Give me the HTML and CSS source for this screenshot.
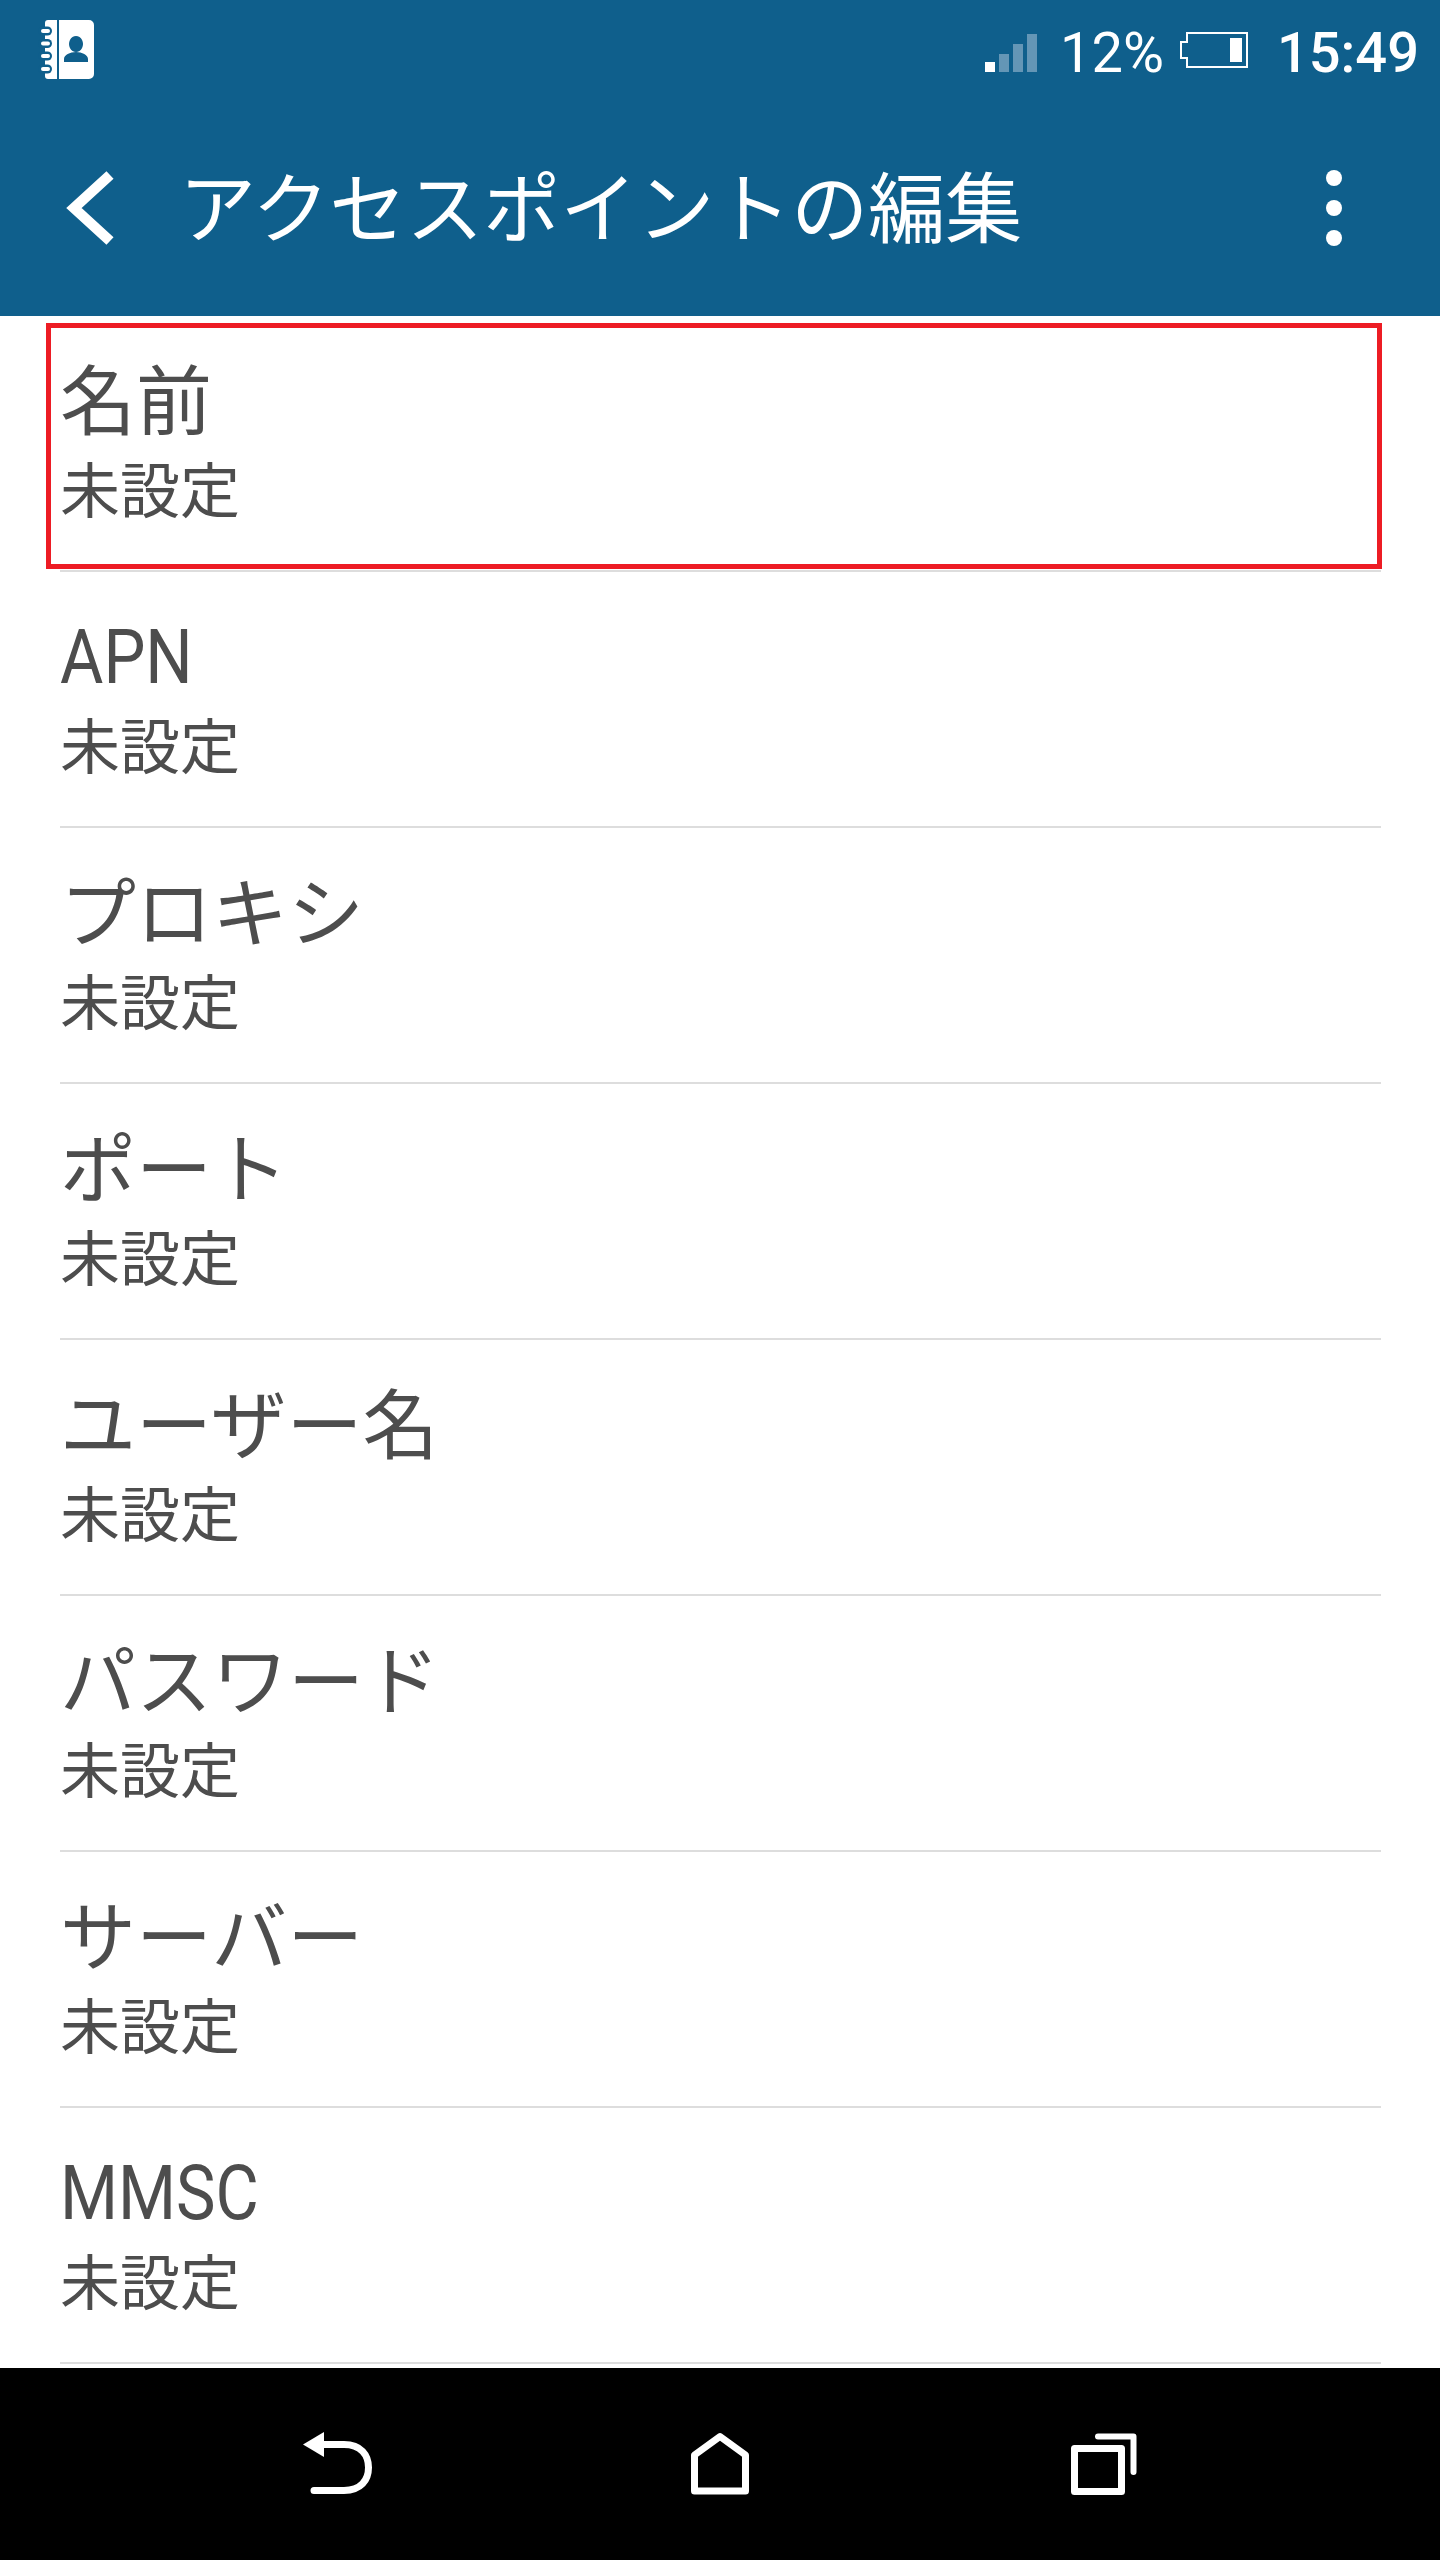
FILE: index.html
```html
<!DOCTYPE html>
<html lang="ja">
<head>
<meta charset="UTF-8">
<meta name="viewport" content="width=device-width, initial-scale=1.0">
<title>アクセスポイントの編集</title>
<link rel="stylesheet" href="styles.css">
</head>
<body>
<div class="screen">
    <header class="appbar">
        <div class="status">
            <svg class="contacts-icon" width="54" height="60" viewBox="0 0 54 60">
                <path fill="#fff" d="M8 0H17V59H8a3 3 0 0 1-3-3V3a3 3 0 0 1 3-3Z"/>
                <g fill="#0f5f8c">
                    <rect x="-2" y="6.500" width="14" height="9" rx="4.500"/>
                    <rect x="-2" y="19" width="14" height="9" rx="4.500"/>
                    <rect x="-2" y="31.500" width="14" height="9" rx="4.500"/>
                    <rect x="-2" y="44.500" width="14" height="9" rx="4.500"/>
                </g>
                <g fill="#fff">
                    <rect x="1" y="9" width="9" height="4" rx="2"/>
                    <rect x="1" y="21.500" width="9" height="4" rx="2"/>
                    <rect x="1" y="34" width="9" height="4" rx="2"/>
                    <rect x="1" y="47" width="9" height="4" rx="2"/>
                </g>
                <path fill="#fff" fill-rule="evenodd" d="M19 0H49a5 5 0 0 1 5 5V54a5 5 0 0 1-5 5H19ZM36 16a7 8 0 1 0 .01 0ZM48 42V39C48 35 42 32 36 32S24 35 24 39V42Z"/>
            </svg>
            <div class="status-right">
                <svg class="signal" width="52" height="38" viewBox="0 0 52 38">
                    <rect x="0" y="28" width="10" height="10" fill="#fff"/>
                    <rect x="14" y="20" width="10" height="18" fill="#6496b6"/>
                    <rect x="28" y="10" width="10" height="28" fill="#6496b6"/>
                    <rect x="42" y="0" width="10" height="38" fill="#6496b6"/>
                </svg>
                <span class="battery-text">12%</span>
                <svg class="battery" width="68" height="36" viewBox="0 0 68 36">
                    <path fill="none" stroke="#fff" stroke-width="2" d="M7 1H67V35H7V26H1V10H7Z"/>
                    <rect x="50" y="6" width="12" height="24" fill="#fff"/>
                </svg>
                <span class="clock">15:49</span>
            </div>
        </div>
        <div class="toolbar">
            <svg class="back" width="48" height="74" viewBox="0 0 48 74">
                <path fill="none" stroke="#fff" stroke-width="10.500" d="M44 4L8 37L44 70"/>
            </svg>
            <h1 class="title">アクセスポイントの編集</h1>
            <div class="more"><i></i><i></i><i></i></div>
        </div>
    </header>

    <main class="list">
        <div class="row selected"><div class="name">名前</div><div class="value">未設定</div></div>
        <div class="row"><div class="name latin">APN</div><div class="value">未設定</div></div>
        <div class="row"><div class="name">プロキシ</div><div class="value">未設定</div></div>
        <div class="row"><div class="name">ポート</div><div class="value">未設定</div></div>
        <div class="row"><div class="name">ユーザー名</div><div class="value">未設定</div></div>
        <div class="row"><div class="name">パスワード</div><div class="value">未設定</div></div>
        <div class="row"><div class="name">サーバー</div><div class="value">未設定</div></div>
        <div class="row"><div class="name latin">MMSC</div><div class="value">未設定</div></div>
    </main>

    <nav class="navbar">
        <svg width="70" height="62" viewBox="0 0 70 62">
            <path fill="none" stroke="#fff" stroke-width="7" stroke-linecap="round" d="M11 57.500H41C58 57.500 65.500 47 65.500 34.500S58 11.500 41 11.500H18"/>
            <path fill="#fff" d="M0 11.500L21 -1V24Z"/>
        </svg>
        <svg width="58" height="62" viewBox="0 0 58 62">
            <path fill="none" stroke="#fff" stroke-width="7" stroke-linejoin="round" d="M3.500 58V22L29 3.500L54.500 22V58Z"/>
        </svg>
        <svg width="66" height="62" viewBox="0 0 66 62">
            <rect x="3.500" y="15.500" width="47" height="43" fill="none" stroke="#fff" stroke-width="7" stroke-linejoin="round"/>
            <path fill="none" stroke="#fff" stroke-width="6" stroke-linecap="round" stroke-linejoin="round" d="M27 3.500H62.500V39"/>
        </svg>
    </nav>
</div>
</body>
</html>
```
FILE: styles.css
```css
* { box-sizing: border-box; }
body { margin: 0; background: #fff; font-family: Roboto, "Noto Sans CJK JP", sans-serif; }
.screen { width: 1440px; height: 2560px; display: flex; flex-direction: column; overflow: hidden; }

.appbar { height: 316px; background: #0f5f8c; color: #fff; padding-top: 20px; }
.status { height: 60px; display: flex; justify-content: space-between; padding: 0 21px 0 40px; }
.contacts-icon { overflow: visible; }
.status-right { display: flex; align-items: center; height: 60px; }
.signal { margin: 6px 23px 0 0; }
.battery-text { font-size: 56px; font-weight: 400; line-height: 60px; margin-top: 6px; }
.battery { margin: 0 29px 0 16px; }
.clock { font-size: 56px; font-weight: 500; line-height: 60px; margin-top: 6px; }

.toolbar { display: flex; align-items: center; height: 74px; margin-top: 91px; padding: 0 98px 0 66px; }
.title { flex: 1; margin: 5px 0 0 65px; font-size: 77px; font-weight: 400; line-height: 74px; white-space: nowrap; }
.more { display: flex; flex-direction: column; gap: 14px; }
.more i { width: 16px; height: 16px; border-radius: 50%; background: #fff; }

.list { flex: 1; padding: 0 59px 0 60px; overflow: hidden; }
.row { position: relative; height: 256px; border-bottom: 2px solid #ddd; color: #4d4d4d; padding-top: 44px; }
.name { font-size: 76px; line-height: 86px; }
.name.latin { transform: translateY(-2px) scaleX(.875); transform-origin: left; }
.value { font-size: 60px; line-height: 66px; margin-top: 14px; }
.row.selected::after { content: ""; position: absolute; left: -14px; right: -1px; top: 7px; bottom: 1px; border: 5px solid #ed1c24; }

.navbar { height: 192px; margin-top: 4px; background: #000; display: flex; align-items: flex-start; padding: 65px 0 0 303px; }
.navbar svg { overflow: visible; }
.navbar svg:nth-child(2) { margin-left: 318px; }
.navbar svg:nth-child(3) { margin-left: 322px; }
```
